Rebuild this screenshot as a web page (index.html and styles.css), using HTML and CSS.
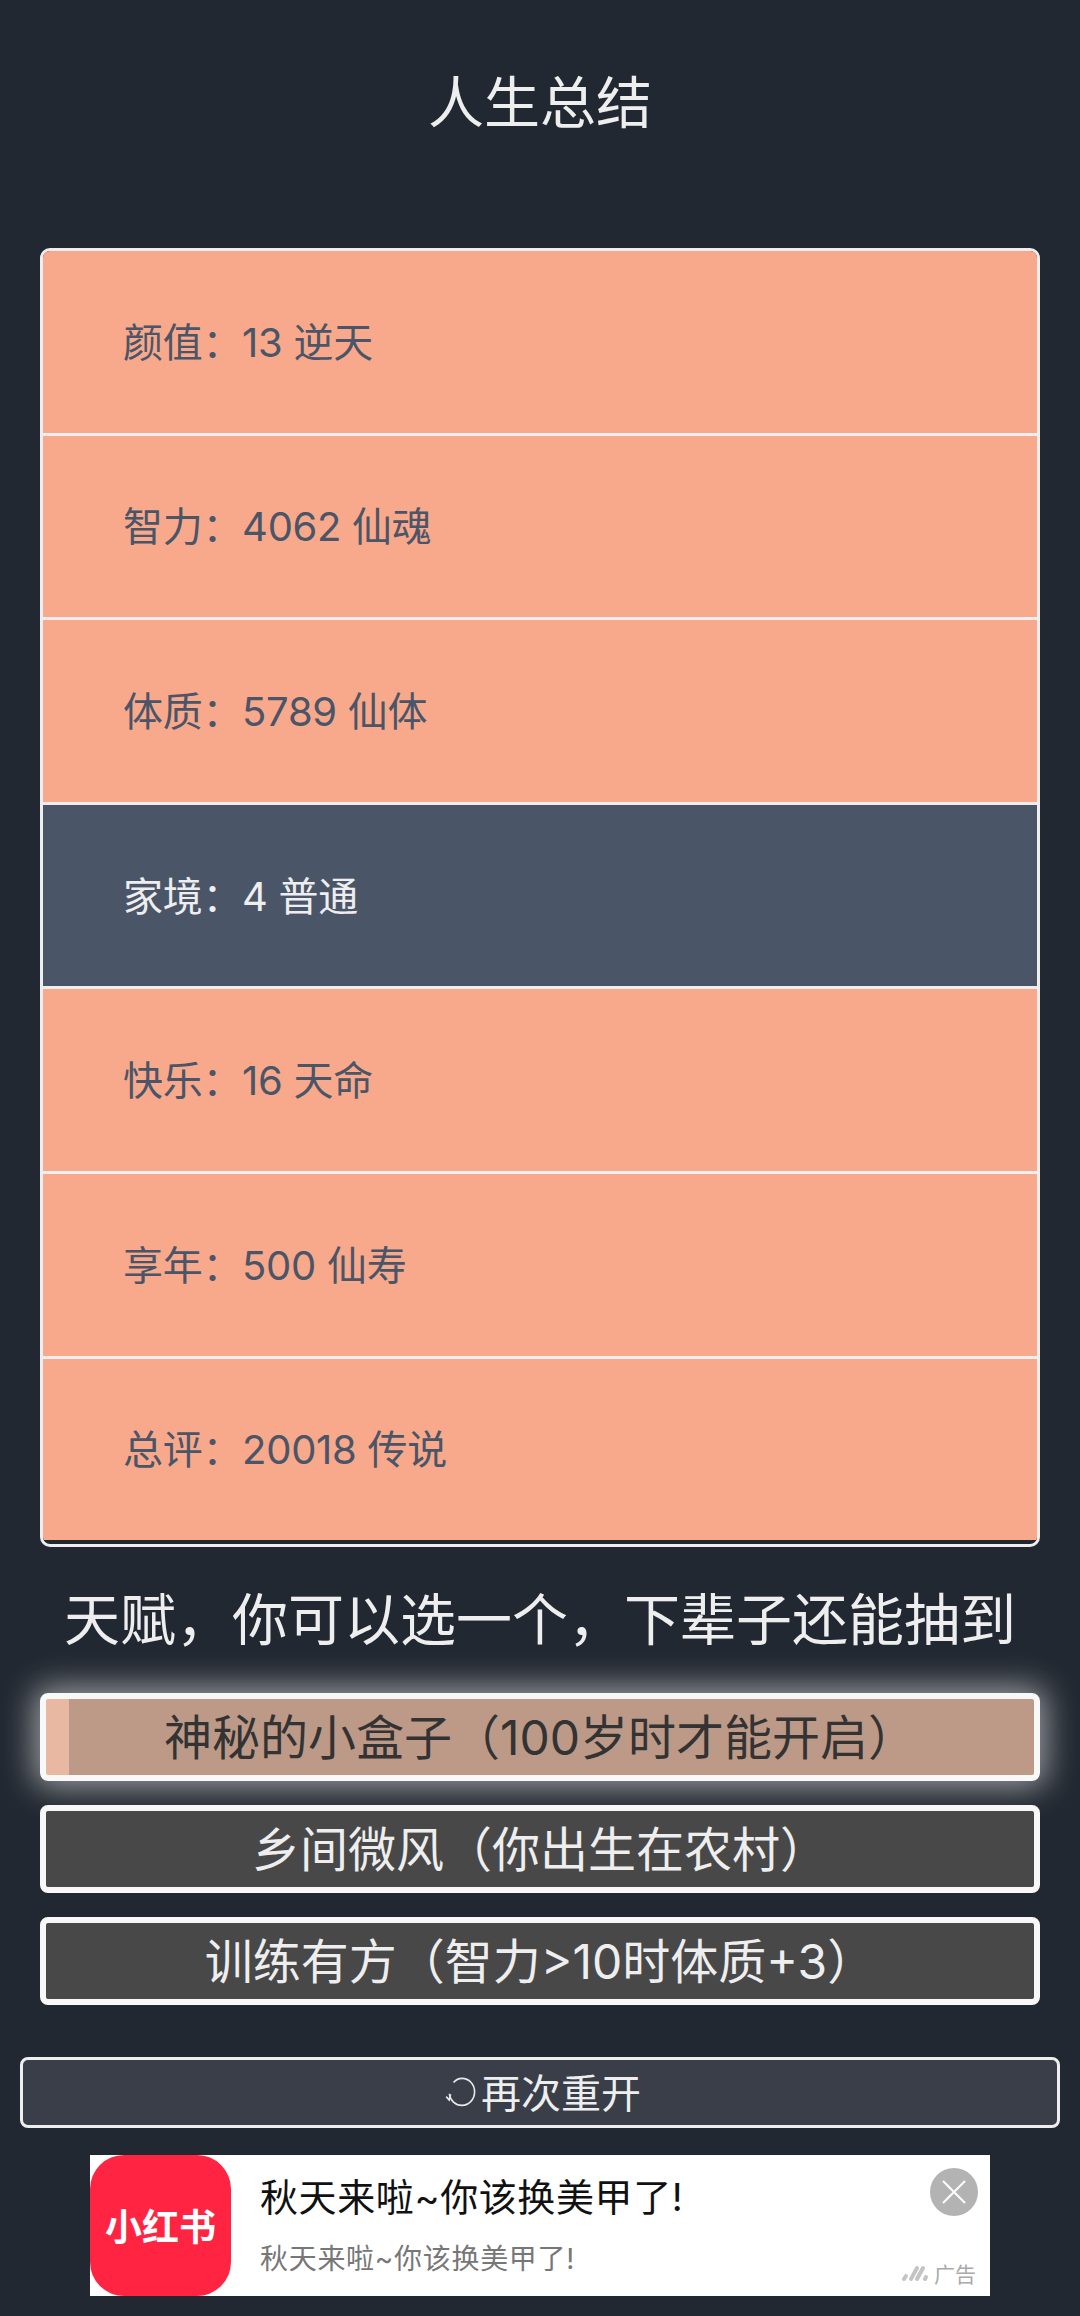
FILE: index.html
```html
<!DOCTYPE html>
<html lang="zh-CN">
<head>
    <meta charset="UTF-8">
    <meta name="viewport" content="width=device-width, initial-scale=1.0">
    <title>人生总结</title>
    <link rel="stylesheet" href="styles.css">
</head>
<body>
    <h1 class="title">人生总结</h1>

    <!-- 属性列表 -->
    <div class="section">
        <ul class="summary">
            <li class="summary-row">颜值：13 逆天</li>
            <li class="summary-row">智力：4062 仙魂</li>
            <li class="summary-row">体质：5789 仙体</li>
            <li class="summary-row summary-row-dark">家境：4 普通</li>
            <li class="summary-row">快乐：16 天命</li>
            <li class="summary-row">享年：500 仙寿</li>
            <li class="summary-row">总评：20018 传说</li>
        </ul>
    </div>

    <h2 class="heading">天赋，你可以选一个，下辈子还能抽到</h2>

    <!-- 天赋选择 -->
    <div class="section talents">
        <button class="talent talent-selected">神秘的小盒子（100岁时才能开启）</button>
        <button class="talent">乡间微风（你出生在农村）</button>
        <button class="talent">训练有方（智力&gt;10时体质+3）</button>
    </div>

    <button class="restart">
        <svg class="restart-icon" width="32" height="30" viewBox="0 0 32 30" fill="none" stroke="#e8e8e8" stroke-width="1.6">
            <path d="M8.5 5.5C11 2.6 14 1.4 17 1.4c7 0 12.6 6 12.6 13.4S24 28.4 17 28.4c-6.6 0-12-5-12.6-11.6"/>
            <path d="M1.2 19.6l3 3.4 1.4-5.6"/>
        </svg>再次重开
    </button>

    <!-- 广告 -->
    <div class="ad">
        <div class="ad-logo">小红书</div>
        <div class="ad-text">
            <div class="ad-title">秋天来啦~你该换美甲了!</div>
            <div class="ad-sub">秋天来啦~你该换美甲了!</div>
        </div>
        <div class="ad-close">
            <svg width="24" height="24" viewBox="0 0 24 24" stroke="#fff" stroke-width="2">
                <path d="M1 1l22 22M23 1L1 23"/>
            </svg>
        </div>
        <div class="ad-mark">
            <svg width="28" height="18" viewBox="0 0 28 18" fill="none" stroke="#c4c4c4" stroke-width="4" stroke-linecap="round">
                <path d="M3 15l2-3M10 15l6-11M16 15l6-11M24 15l1-2"/>
            </svg>广告
        </div>
    </div>
</body>
</html>
```

FILE: styles.css
```css
* {
    box-sizing: border-box;
}
body {
    margin: 0;
    background-color: #222831;
    font-family: Inter, "Noto Sans CJK SC", sans-serif;
}
.title {
    margin: 0;
    height: 248px;
    padding-bottom: 42px;
    line-height: 206px;
    text-align: center;
    font-size: 56px;
    font-weight: normal;
    color: #eeeeee;
}
.section {
    padding: 0 40px;
}
.summary {
    margin: 0;
    padding: 0 0 3.8px;
    list-style: none;
    border: 3px solid #eeeeee;
    border-radius: 10px;
    overflow: hidden;
}
.summary-row {
    display: flex;
    align-items: center;
    height: 184.6px;
    padding: 0 0 4px 80px;
    border-bottom: 3px solid #eeeeee;
    background-color: #f8a98b;
    font-size: 40px;
    letter-spacing: -0.3px;
    color: #4a5568;
}
.summary-row:last-child {
    height: 181.6px;
    border-bottom: none;
}
.summary-row-dark {
    background-color: #4a5568;
    color: #eeeeee;
}
.heading {
    margin: 0;
    line-height: 146px;
    text-align: center;
    font-size: 56px;
    font-weight: normal;
    color: #eeeeee;
}
.talents {
    display: flex;
    flex-direction: column;
    gap: 24px;
}
.talent {
    height: 88px;
    padding: 0 0 6px;
    border: 6px solid #f8f8f8;
    border-radius: 8px;
    background-color: #484848;
    font-family: inherit;
    font-size: 48px;
    color: #eeeeee;
}
.talent-selected {
    background: linear-gradient(90deg, #e9b8a3 23px, #bd9a88 23px);
    color: #333333;
    box-shadow: 0 0 32px 6px rgba(238, 238, 238, 0.6);
}
.restart {
    display: flex;
    align-items: center;
    justify-content: center;
    width: 1040px;
    height: 71px;
    margin: 52px 20px 0;
    padding: 0 0 3px 6px;
    border: 3px solid #eeeeee;
    border-radius: 8px;
    background-color: #393e49;
    font-family: inherit;
    font-size: 40px;
    color: #eeeeee;
}
.restart-icon {
    margin: 3px 4px 0 0;
}
.ad {
    position: relative;
    display: flex;
    width: 900px;
    height: 141px;
    margin: 27px 90px 0;
    background-color: #ffffff;
}
.ad-logo {
    display: flex;
    align-items: center;
    justify-content: center;
    width: 141px;
    height: 141px;
    border-radius: 34px;
    background-color: #ff2442;
    font-size: 37px;
    font-weight: bold;
    color: #ffffff;
}
.ad-text {
    padding-left: 29px;
}
.ad-title {
    margin-top: 18px;
    line-height: 48px;
    font-size: 38px;
    letter-spacing: 0.6px;
    color: #111111;
}
.ad-sub {
    margin-top: 20px;
    line-height: 36px;
    font-size: 28px;
    letter-spacing: 0.7px;
    color: #777777;
}
.ad-close {
    position: absolute;
    top: 13px;
    right: 12px;
    display: flex;
    align-items: center;
    justify-content: center;
    width: 48px;
    height: 48px;
    border-radius: 50%;
    background-color: #b3b3b3;
}
.ad-mark {
    position: absolute;
    right: 14px;
    bottom: 8px;
    display: flex;
    align-items: center;
    gap: 5px;
    font-size: 21px;
    color: #aaaaaa;
}
```
